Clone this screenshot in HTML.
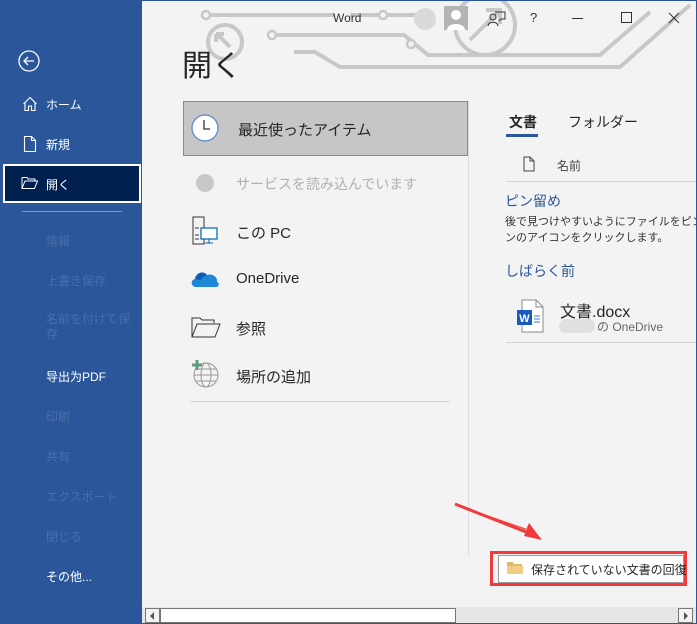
<!DOCTYPE html>
<html><head><meta charset="utf-8"><style>
*{margin:0;padding:0;box-sizing:border-box}
body{width:697px;height:624px;overflow:hidden;background:#2b579a;font-family:"Liberation Sans","Noto Sans CJK JP",sans-serif;position:relative}
#main{position:absolute;left:142px;top:1px;width:554px;height:622px;background:#f3f3f3;overflow:hidden}
.a{position:absolute;white-space:nowrap}
.nav{position:absolute;left:46px;font-size:12px;color:#fff}
.dis{color:#4a6ea8}
</style></head><body>
<!-- sidebar -->
<svg class="a" style="left:17px;top:49px" width="24" height="24" viewBox="0 0 24 24"><circle cx="12" cy="12" r="10" fill="none" stroke="#fff" stroke-width="1.3"/><path d="M17 12H7M11 8l-4 4 4 4" fill="none" stroke="#fff" stroke-width="1.3"/></svg>
<svg class="a" style="left:22px;top:96px" width="16" height="16" viewBox="0 0 16 16"><path d="M1.5 8L8 1.5 14.5 8M3 6.5V14.5H6.5V10H9.5V14.5H13V6.5" fill="none" stroke="#fff" stroke-width="1.1"/></svg>
<div class="nav" style="top:96px">ホーム</div>
<svg class="a" style="left:23px;top:135px" width="14" height="18" viewBox="0 0 14 18"><path d="M1.5 1.5H8.5L12.5 5.5V16.5H1.5ZM8.5 1.5V5.5H12.5" fill="none" stroke="#fff" stroke-width="1.1"/></svg>
<div class="nav" style="top:136px">新規</div>
<div class="a" style="left:3px;top:164px;width:138px;height:39px;background:#002050;border:2px solid #fff"></div>
<svg class="a" style="left:21px;top:176px" width="18" height="14" viewBox="0 0 18 14"><path d="M1 1.5H6L7 3H14V5M1 1.5V12.5H13.5L16.5 5H4L1 12.5" fill="none" stroke="#fff" stroke-width="1"/></svg>
<div class="nav" style="top:176px">開く</div>
<div class="a" style="left:22px;top:211px;width:100px;height:1px;background:#7d97c4"></div>
<div class="nav dis" style="top:232px">情報</div>
<div class="nav dis" style="top:272px">上書き保存</div>
<div class="nav dis" style="top:312px;line-height:15px">名前を付けて保<br>存</div>
<div class="nav" style="top:368px">导出为PDF</div>
<div class="nav dis" style="top:408px">印刷</div>
<div class="nav dis" style="top:448px">共有</div>
<div class="nav dis" style="top:488px">エクスポート</div>
<div class="nav dis" style="top:528px">閉じる</div>
<div class="nav" style="top:568px">その他...</div>

<div id="main">
<!-- decorative circuit -->
<svg class="a" style="left:0;top:0" width="554" height="80" viewBox="142 1 554 80"><g fill="none" stroke="#c8c8c8" stroke-width="4"><path d="M210 15H335M350 15H418"/><path d="M274 35H404L428 55H600L650 12"/><path d="M294 52H315L340 67H620L690 5"/><circle cx="225" cy="42" r="17"/><path d="M218 35l12 12M216 34h8M216 34v8"/><circle cx="485" cy="25" r="30"/><path d="M470 40L500 10M486 10H500V24"/></g><g fill="#f3f3f3" stroke="#c8c8c8" stroke-width="2.5"><circle cx="206" cy="15" r="4"/><circle cx="272" cy="35" r="4"/><circle cx="383" cy="15" r="4"/><circle cx="411" cy="44" r="4"/></g></svg>
<div class="a" style="left:191px;top:10px;font-size:12px;color:#333">Word</div>
<div class="a" style="left:272px;top:7px;width:22px;height:22px;border-radius:50%;background:#dadada"></div>
<div class="a" style="left:302px;top:5px;width:24px;height:24px;background:#b4b4b4"><svg width="24" height="24"><circle cx="12" cy="9" r="5" fill="#fff"/><path d="M3 24C3 16 21 16 21 24Z" fill="#fff"/></svg></div>
<svg class="a" style="left:345px;top:9px" width="20" height="18" viewBox="0 0 20 18"><circle cx="6" cy="7" r="3" fill="none" stroke="#333"/><path d="M1 16C1 11 11 11 11 16M8 2H18V9H14L12 11" fill="none" stroke="#333"/></svg>
<div class="a" style="left:388px;top:9px;font-size:13px;color:#333">?</div>
<div class="a" style="left:430px;top:17px;width:11px;height:1px;background:#333"></div>
<div class="a" style="left:479px;top:11px;width:11px;height:11px;border:1px solid #333"></div>
<svg class="a" style="left:526px;top:11px" width="12" height="12"><path d="M1 1L11 11M11 1L1 11" stroke="#333"/></svg>

<div class="a" style="left:40px;top:40px;font-size:30px;color:#262626">開く</div>
<div class="a" style="left:41px;top:100px;width:285px;height:55px;background:#c6c6c6;border:1px solid #8a8a8a"></div>
<svg class="a" style="left:48px;top:112px" width="30" height="30"><circle cx="15" cy="15" r="13" fill="#fff" stroke="#5b8bd0" stroke-width="1.3"/><path d="M14 7V16H20" fill="none" stroke="#333" stroke-width="1.3"/></svg>
<div class="a" style="left:96px;top:118px;font-size:15px;color:#262626">最近使ったアイテム</div>
<div class="a" style="left:54px;top:173px;width:18px;height:18px;border-radius:50%;background:#c8c8c8"></div>
<div class="a" style="left:94px;top:173px;font-size:14px;color:#b0b0b0">サービスを読み込んでいます</div>
<svg class="a" style="left:48px;top:214px" width="30" height="32"><path d="M3 2H14V29H3Z" fill="none" stroke="#333" stroke-width="1"/><path d="M5 13H9M5 20H9M5 24H9" stroke="#333"/><rect x="11" y="13" width="16" height="11" fill="#fff" stroke="#0063b1" stroke-width="1.2"/><path d="M19 24V28M15 28H23" stroke="#0063b1"/></svg>
<div class="a" style="left:94px;top:221px;font-size:15px;color:#262626">この PC</div>
<svg class="a" style="left:48px;top:266px" width="30" height="22"><path d="M6 20C1 20 0 13 5 12C6 6 13 3 17 8C22 6 28 10 27 15C30 16 29 20 26 20Z" fill="#1e88d8"/><path d="M5 12C6 6 13 3 17 8C14 9 12 11 11 13Z" fill="#0a5fb4"/></svg>
<div class="a" style="left:94px;top:269px;font-size:15px;color:#262626">OneDrive</div>
<svg class="a" style="left:48px;top:314px" width="32" height="24"><path d="M2 22V3H10L12 5H24V8M2 22H25L30 9H7Z" fill="none" stroke="#333" stroke-width="1"/></svg>
<div class="a" style="left:94px;top:317px;font-size:15px;color:#262626">参照</div>
<svg class="a" style="left:48px;top:358px" width="30" height="30"><circle cx="16" cy="16" r="12" fill="none" stroke="#999"/><ellipse cx="16" cy="16" rx="5" ry="12" fill="none" stroke="#999"/><path d="M4 16H28M6 10H26M6 22H26" stroke="#999"/><path d="M7 1V11M2 6H12" stroke="#5f9a7a" stroke-width="3"/></svg>
<div class="a" style="left:94px;top:365px;font-size:15px;color:#262626">場所の追加</div>
<div class="a" style="left:48px;top:400px;width:260px;height:1px;background:#d4d4d4"></div>
<div class="a" style="left:326px;top:100px;width:1px;height:455px;background:#dcdcdc"></div>

<div class="a" style="left:367px;top:111px;font-size:14px;font-weight:bold;color:#262626">文書</div>
<div class="a" style="left:364px;top:133px;width:32px;height:3px;background:#2b579a"></div>
<div class="a" style="left:426px;top:111px;font-size:14px;color:#262626">フォルダー</div>
<svg class="a" style="left:381px;top:155px" width="12" height="16"><path d="M1 1H7L11 5V15H1ZM7 1V5H11" fill="none" stroke="#444"/></svg>
<div class="a" style="left:415px;top:156px;font-size:12px;color:#444">名前</div>
<div class="a" style="left:364px;top:180px;width:190px;height:1px;background:#d4d4d4"></div>
<div class="a" style="left:363px;top:190px;font-size:14px;color:#2b579a">ピン留め</div>
<div class="a" style="left:363px;top:213px;font-size:11px;color:#333;line-height:16px">後で見つけやすいようにファイルをピン留めするには、<br>ンのアイコンをクリックします。</div>
<div class="a" style="left:363px;top:260px;font-size:14px;color:#2b579a">しばらく前</div>
<svg class="a" style="left:374px;top:298px" width="30" height="34"><path d="M6 1H20L27 8V33H6Z" fill="#fff" stroke="#888"/><path d="M20 1V8H27" fill="none" stroke="#888"/><path d="M18 17H24M18 20H24M18 23H24" stroke="#2b7cd3"/><rect x="1" y="11" width="15" height="15" fill="#185abd"/><text x="8.5" y="23" font-size="11" font-weight="bold" fill="#fff" text-anchor="middle" font-family="Liberation Sans">W</text></svg>
<div class="a" style="left:418px;top:297px;font-size:16px;color:#262626">文書.docx</div>
<div class="a" style="left:417px;top:318px;width:36px;height:14px;background:#e0e0e0;border-radius:7px"></div>
<div class="a" style="left:455px;top:317px;font-size:12px;color:#666">の OneDrive</div>
<div class="a" style="left:364px;top:341px;width:190px;height:1px;background:#d4d4d4"></div>

<!-- arrow -->
<svg class="a" style="left:300px;top:495px" width="110" height="55"><path d="M13 8L85 33L82 40L100 44L87 27L84 34Z" fill="#f03b3b"/><path d="M13 8L84 36" stroke="#f03b3b" stroke-width="3"/></svg>
<div class="a" style="left:348px;top:550px;width:197px;height:35px;border:3px solid #f03b3b"></div>
<div class="a" style="left:356px;top:554px;width:186px;height:28px;border:1px solid #9a9a9a;background:#fff"></div>
<svg class="a" style="left:364px;top:559px" width="18" height="15"><path d="M1 2H7L8 4H16V14H1Z" fill="#e2b96a"/><path d="M1 6H17V14H1Z" fill="#f2cd85"/></svg>
<div class="a" style="left:389px;top:560px;font-size:12px;color:#262626">保存されていない文書の回復</div>

<!-- scrollbar -->
<div class="a" style="left:0;top:606px;width:554px;height:16px;background:#e6e6e6"></div>
<div class="a" style="left:3px;top:607px;width:15px;height:15px;border:1px solid #777;background:#f3f3f3"></div>
<div class="a" style="left:18px;top:607px;width:296px;height:15px;border:1px solid #777;background:#fff"></div>
<div class="a" style="left:536px;top:607px;width:15px;height:15px;border:1px solid #777;background:#f3f3f3"></div>
<svg class="a" style="left:7px;top:611px" width="6" height="8"><path d="M5 0V8L1 4Z" fill="#555"/></svg>
<svg class="a" style="left:541px;top:611px" width="6" height="8"><path d="M1 0V8L5 4Z" fill="#555"/></svg>
</div>
</body></html>
